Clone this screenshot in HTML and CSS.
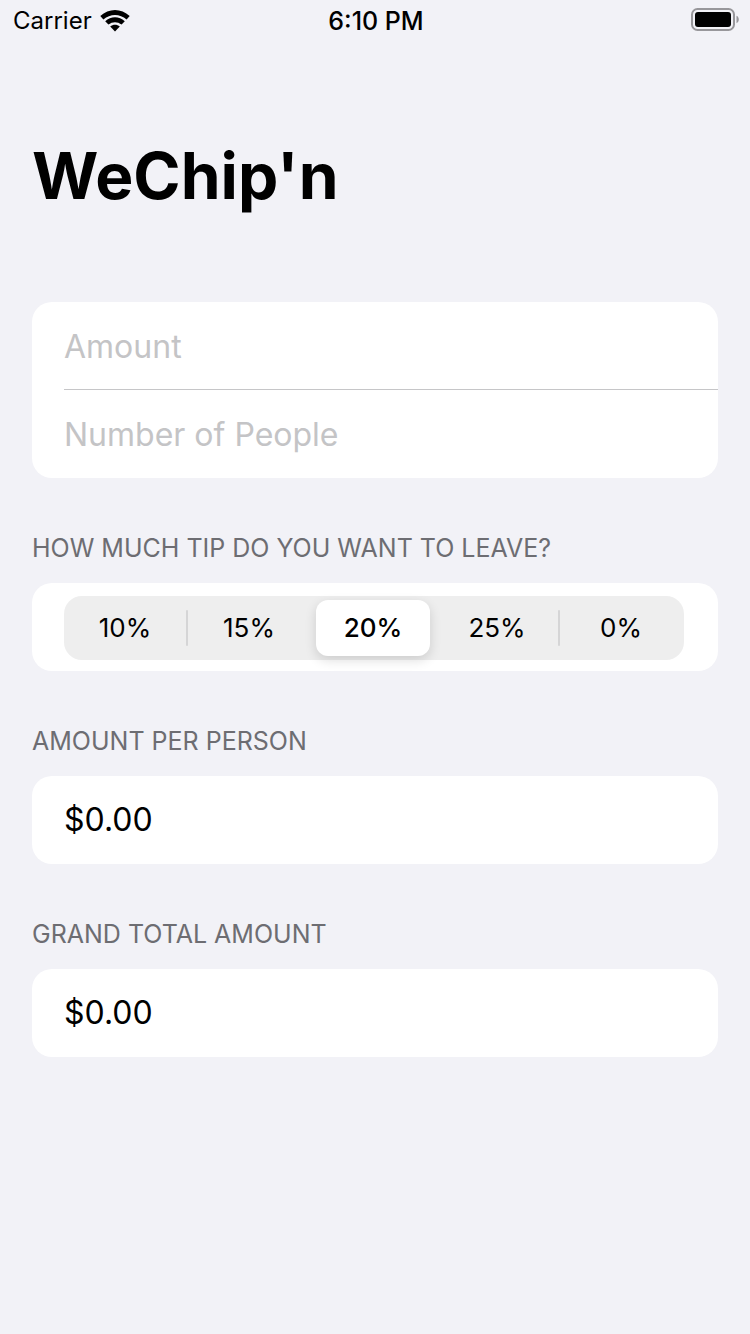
FILE: index.html
```html
<!DOCTYPE html>
<html lang="en">
<head>
<meta charset="utf-8">
<meta name="viewport" content="width=device-width, initial-scale=1">
<title>WeChip'n</title>
<link rel="stylesheet" href="styles.css">
</head>
<body>
<header class="status">
  <div class="carrier">
    <span>Carrier</span>
    <svg class="wifi" viewBox="0 0 30 22" aria-hidden="true">
      <path d="M.3 6C8.8-2 21.2-2 29.7 6L26.6 9.4C19.8 3.4 10.2 3.4 3.4 9.4Z"/>
      <path d="M5.2 11.2C11 6 19 6 24.8 11.2L21.6 14.6C17.6 11.3 12.4 11.3 8.4 14.6Z"/>
      <path d="M10.2 16.4C13 14.2 17 14.2 19.8 16.4L15 21.6Z"/>
    </svg>
  </div>
  <time class="clock">6:10 PM</time>
  <svg class="battery" viewBox="0 0 48 26" aria-hidden="true">
    <rect class="shell" x="1" y="1" width="42" height="21" rx="5.5"/>
    <rect x="4" y="4" width="36" height="15" rx="3"/>
    <path class="cap" d="M45.5 7.8C48.5 9 48.5 14 45.5 15.2Z"/>
  </svg>
</header>
<main class="page">
  <h1 class="title">WeChip'n</h1>
  <form>
    <div class="card">
      <div class="row"><input class="field" type="text" placeholder="Amount" aria-label="Amount"></div>
      <div class="row"><input class="field" type="text" placeholder="Number of People" aria-label="Number of People"></div>
    </div>
    <section role="radiogroup" aria-labelledby="tip">
      <h2 class="heading" id="tip">HOW MUCH TIP DO YOU WANT TO LEAVE?</h2>
      <div class="card picker">
        <div class="segments">
          <label class="segment divided"><input class="radio" type="radio" name="tip"><span class="pill">10%</span></label>
          <label class="segment"><input class="radio" type="radio" name="tip"><span class="pill">15%</span></label>
          <label class="segment"><input class="radio" type="radio" name="tip" checked><span class="pill">20%</span></label>
          <label class="segment divided"><input class="radio" type="radio" name="tip"><span class="pill">25%</span></label>
          <label class="segment"><input class="radio" type="radio" name="tip"><span class="pill">0%</span></label>
        </div>
      </div>
    </section>
    <section>
      <h2 class="heading">AMOUNT PER PERSON</h2>
      <div class="card"><output class="value">$0.00</output></div>
    </section>
    <section>
      <h2 class="heading">GRAND TOTAL AMOUNT</h2>
      <div class="card"><output class="value">$0.00</output></div>
    </section>
  </form>
</main>
</body>
</html>
```
FILE: styles.css
```css
* { box-sizing: border-box; }
body {
  margin: 0;
  min-height: 100vh;
  background: #f2f2f7;
  color: #000;
  font-family: Inter, "Liberation Sans", sans-serif;
}
.status {
  display: grid;
  grid-template-columns: 1fr auto 1fr;
  align-items: center;
  padding: 0 11px 0 13px;
  font-size: 24px;
  line-height: 42px;
}
.carrier { display: flex; align-items: center; gap: 8px; }
.wifi { width: 30px; height: 22px; }
.clock { font-size: 25px; font-weight: 500; }
.battery { width: 48px; height: 26px; justify-self: end; }
.shell { fill: none; stroke: #98979b; stroke-width: 2; }
.cap { fill: #98979b; }
.page { padding: 94px 32px 32px; }
.title {
  margin: 0 0 86px;
  font-size: 64px;
  line-height: 80px;
  font-weight: 700;
}
.card { background: #fff; border-radius: 20px; }
.row { padding-left: 32px; }
.row + .row { position: relative; }
.row + .row::before {
  content: "";
  position: absolute;
  top: -1px;
  left: 32px;
  right: 0;
  height: 1px;
  background: #c6c6c8;
}
.field {
  display: block;
  width: 100%;
  height: 88px;
  padding: 0;
  border: 0;
  border-radius: 20px;
  outline: 0;
  background: transparent;
  color: #000;
  font: inherit;
  font-size: 32px;
}
.field::placeholder { color: #c4c4c6; opacity: 1; }
.heading {
  margin: 0;
  padding: 54px 0 19px;
  color: #6d6d72;
  font-size: 25px;
  line-height: 32px;
  font-weight: 400;
}
.picker { padding: 13px 34px 11px 32px; }
.segments {
  display: grid;
  grid-template-columns: repeat(5, 1fr);
  border-radius: 18px;
  background: #eee;
}
.segment {
  position: relative;
  display: flex;
  padding: 4px 6px 4px 4px;
}
.divided::after {
  content: "";
  position: absolute;
  top: 14px;
  right: 0;
  width: 2px;
  height: 36px;
  border-radius: 1px;
  background: #d5d5d6;
}
.radio { position: absolute; inset: 0; margin: 0; opacity: 0; }
.pill {
  flex: 1;
  border-radius: 12px;
  font-size: 26px;
  line-height: 56px;
  font-weight: 400;
  text-align: center;
}
.radio:checked + .pill {
  background: #fff;
  box-shadow: 0 4px 12px rgba(0, 0, 0, .14);
  font-weight: 500;
}
.value {
  display: block;
  padding: 0 32px;
  font-size: 32px;
  line-height: 88px;
}
```
